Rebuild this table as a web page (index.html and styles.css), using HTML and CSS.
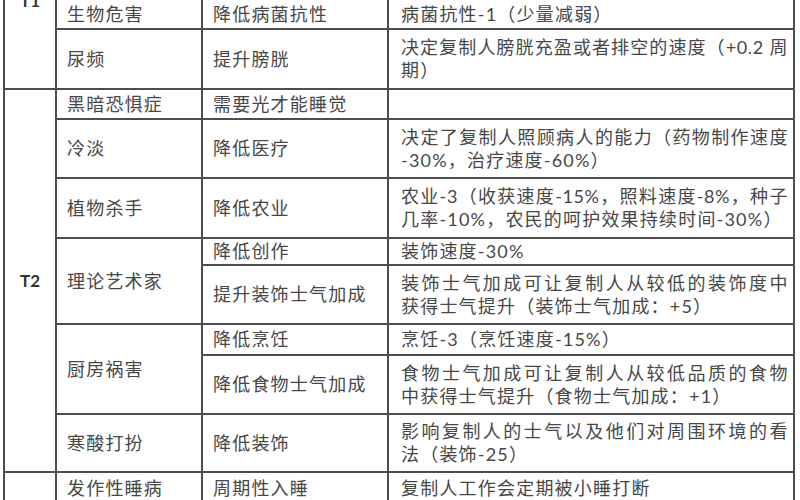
FILE: index.html
```html
<!DOCTYPE html>
<html lang="zh-CN">
<head>
<meta charset="utf-8">
<title>特质表</title>
<link rel="stylesheet" href="styles.css">
</head>
<body>
<table class="traits">
  <colgroup>
    <col class="c-tier">
    <col class="c-name">
    <col class="c-effect">
    <col class="c-desc">
  </colgroup>
  <tbody>
    <tr class="h88">
      <td class="tier" rowspan="3">T1</td>
      <td></td><td></td><td></td>
    </tr>
    <tr class="h30">
      <td>生物危害</td>
      <td>降低病菌抗性</td>
      <td class="desc">病菌抗性-1（少量减弱）</td>
    </tr>
    <tr class="h60">
      <td>尿频</td>
      <td>提升膀胱</td>
      <td class="desc"><span class="line full">决定复制人膀胱充盈或者排空的速度（+0.2 周</span><span class="line">期）</span></td>
    </tr>
    <tr class="h30">
      <td class="tier" rowspan="8">T2</td>
      <td>黑暗恐惧症</td>
      <td>需要光才能睡觉</td>
      <td class="desc"></td>
    </tr>
    <tr class="h59">
      <td>冷淡</td>
      <td>降低医疗</td>
      <td class="desc"><span class="line full">决定了复制人照顾病人的能力（药物制作速度</span><span class="line">-30%，治疗速度-60%）</span></td>
    </tr>
    <tr class="h60">
      <td>植物杀手</td>
      <td>降低农业</td>
      <td class="desc"><span class="line full">农业-3（收获速度-15%，照料速度-8%，种子</span><span class="line">几率-10%，农民的呵护效果持续时间-30%）</span></td>
    </tr>
    <tr class="h27">
      <td rowspan="2">理论艺术家</td>
      <td>降低创作</td>
      <td class="desc">装饰速度-30%</td>
    </tr>
    <tr class="h59">
      <td>提升装饰士气加成</td>
      <td class="desc"><span class="line full">装饰士气加成可让复制人从较低的装饰度中</span><span class="line">获得士气提升（装饰士气加成：+5）</span></td>
    </tr>
    <tr class="h31">
      <td rowspan="2">厨房祸害</td>
      <td>降低烹饪</td>
      <td class="desc">烹饪-3（烹饪速度-15%）</td>
    </tr>
    <tr class="h59">
      <td>降低食物士气加成</td>
      <td class="desc"><span class="line full">食物士气加成可让复制人从较低品质的食物</span><span class="line">中获得士气提升（食物士气加成：+1）</span></td>
    </tr>
    <tr class="h58">
      <td>寒酸打扮</td>
      <td>降低装饰</td>
      <td class="desc"><span class="line full">影响复制人的士气以及他们对周围环境的看</span><span class="line">法（装饰-25）</span></td>
    </tr>
    <tr class="h32">
      <td class="tier"></td>
      <td>发作性睡病</td>
      <td>周期性入睡</td>
      <td class="desc">复制人工作会定期被小睡打断</td>
    </tr>
  </tbody>
</table>
</body>
</html>
```

FILE: styles.css
```css
html, body {
  margin: 0;
  padding: 0;
  background: #ffffff;
  overflow: hidden;
}

.traits {
  margin: -90px 0 0 3px;
  width: 790px;
  table-layout: fixed;
  border-collapse: collapse;
  font-family: Lato, "Noto Sans CJK SC", sans-serif;
  font-size: 18px;
  font-weight: 400;
  letter-spacing: 1.2px;
  color: #474747;
}

.c-tier { width: 52px; }
.c-name { width: 146px; }
.c-effect { width: 186px; }
.c-desc { width: 406px; }

.traits td {
  border: 2px solid #4d4d4d;
  padding: 0 6px 0 10px;
  vertical-align: middle;
  line-height: 23px;
  white-space: nowrap;
  overflow: hidden;
}

.traits td.tier {
  text-align: center;
  padding: 0;
  font-family: Lato, "Liberation Sans", sans-serif;
  font-weight: 700;
  font-size: 17px;
  letter-spacing: 0;
  color: #333333;
}

.traits td.desc {
  padding: 0 5px 0 12px;
}

.line {
  display: block;
}

.line.full {
  text-align: justify;
  text-align-last: justify;
  letter-spacing: 0.6px;
}

.h27 { height: 27px; }
.h30 { height: 30px; }
.h31 { height: 31px; }
.h32 { height: 32px; }
.h58 { height: 58px; }
.h59 { height: 59px; }
.h60 { height: 60px; }
.h88 { height: 88px; }
```
